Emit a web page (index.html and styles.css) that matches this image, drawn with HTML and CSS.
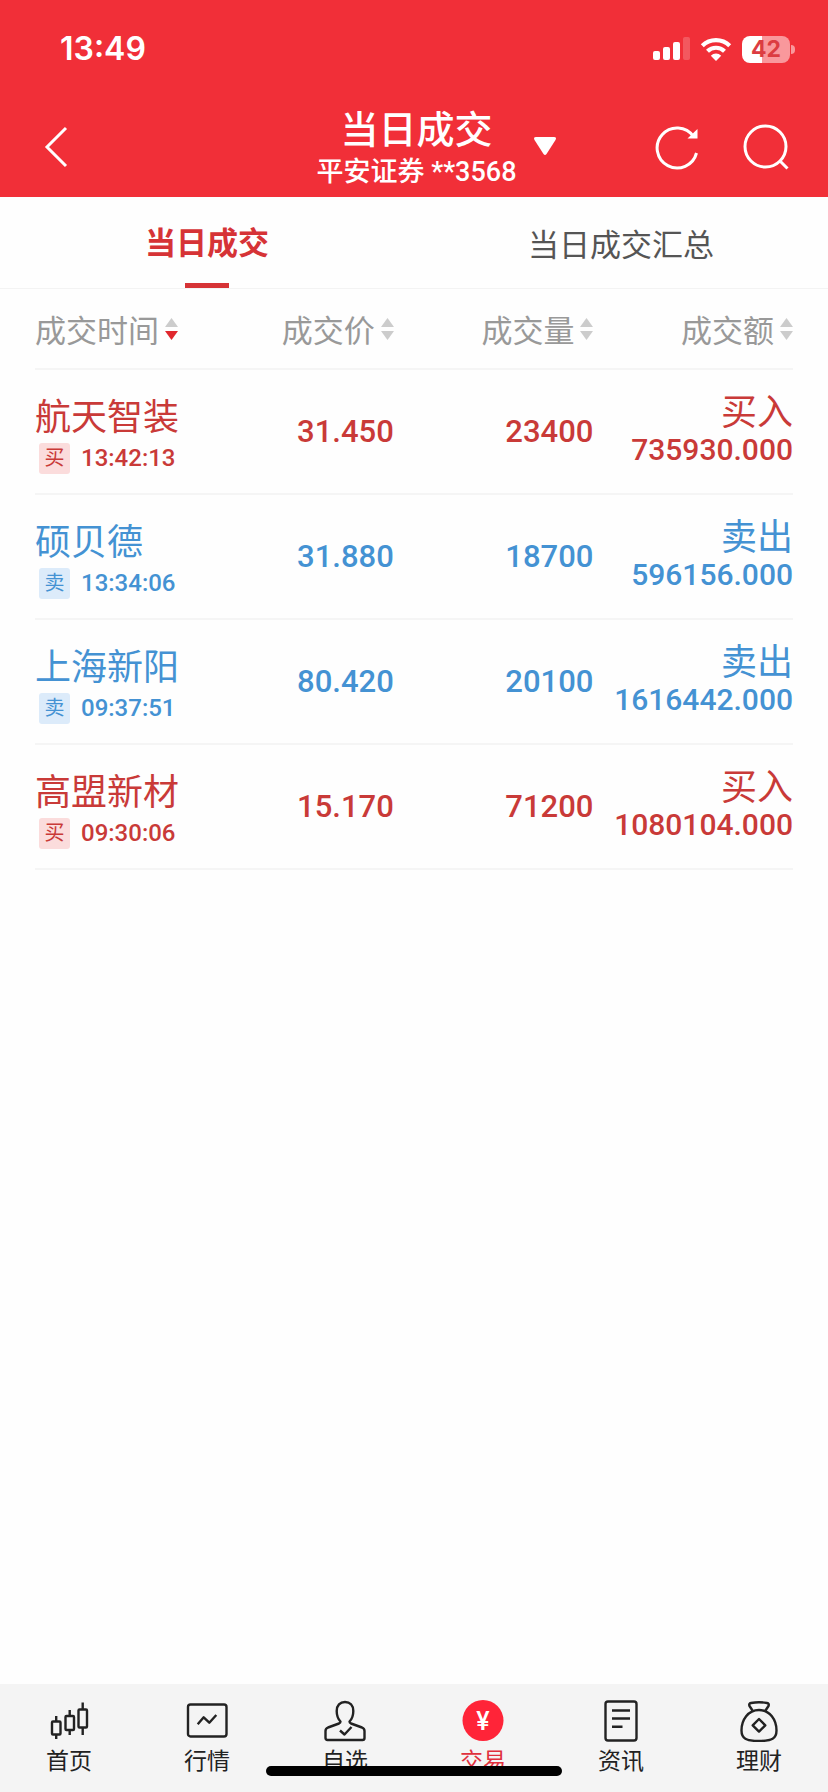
FILE: index.html
```html
<!DOCTYPE html>
<html lang="zh-CN">
<head>
    <meta charset="UTF-8">
    <meta name="viewport" content="width=device-width, initial-scale=1.0">
    <title>当日成交</title>
    <link rel="stylesheet" href="styles.css">
</head>
<body>
    <!-- sort arrows, shared by the table headings -->
    <svg class="sprite" aria-hidden="true">
        <symbol id="sort" viewBox="0 0 13 22">
            <path class="sort-up" d="M6.5 0L13 9H0z"/>
            <path class="sort-down" d="M6.5 22L0 13h13z"/>
        </symbol>
    </svg>

    <header class="top">
        <div class="status-bar">
            <div class="clock">13:49</div>
            <div class="status-icons">
                <svg class="signal" viewBox="0 0 37 24">
                    <rect x="0" y="14" width="7" height="9" rx="2"/>
                    <rect x="10" y="10" width="7" height="13" rx="2"/>
                    <rect x="20" y="5" width="7" height="18" rx="2"/>
                    <rect x="30" y="0" width="7" height="23" rx="2" opacity="0.2"/>
                </svg>
                <svg class="wifi" viewBox="0 0 32 24">
                    <path d="M2.3 8.7a19.5 19.5 0 0 1 27.4 0" fill="none" stroke="#fff" stroke-width="4.2"/>
                    <path d="M7.5 14.2a12.2 12.2 0 0 1 17 0" fill="none" stroke="#fff" stroke-width="4.2"/>
                    <path d="M16 24l-5.2-5.3a7.4 7.4 0 0 1 10.4 0z"/>
                </svg>
                <div class="battery">42</div>
            </div>
        </div>
        <div class="nav-bar">
            <button type="button" class="icon-btn" aria-label="返回">
                <svg width="24" height="42" viewBox="0 0 24 42"><path d="M22 2L3 21l19 19"/></svg>
            </button>
            <div class="title">
                <h1>当日成交</h1>
                <p>平安证券 **3568</p>
            </div>
            <div class="nav-right">
                <button type="button" class="icon-btn" aria-label="切换账户">
                    <svg width="24" height="20" viewBox="0 0 24 20"><path class="caret" d="M3 0h18q3 0 1.500 3L13.500 17q-1.500 2-3 0L1.500 3Q0 0 3 0z"/></svg>
                </button>
                <div class="nav-actions">
                    <button type="button" class="icon-btn" aria-label="刷新">
                        <svg width="46" height="46" viewBox="0 0 46 46">
                            <path d="M38.500 12.500A20 20 0 1 0 41.500 29"/>
                            <path class="caret" d="M42.500 5v9.500h-10z"/>
                        </svg>
                    </button>
                    <button type="button" class="icon-btn" aria-label="搜索">
                        <svg width="46" height="46" viewBox="0 0 46 46">
                            <circle cx="22.500" cy="22.500" r="20.500"/>
                            <path d="M37 37l7.500 7.500"/>
                        </svg>
                    </button>
                </div>
            </div>
        </div>
    </header>

    <nav class="tabs">
        <a href="#" class="tab active">当日成交</a>
        <a href="#" class="tab">当日成交汇总</a>
    </nav>

    <main>
        <table class="deals">
            <thead>
                <tr>
                    <th><button type="button" class="sort-btn desc">成交时间<svg class="sort"><use href="#sort"/></svg></button></th>
                    <th><button type="button" class="sort-btn">成交价<svg class="sort"><use href="#sort"/></svg></button></th>
                    <th><button type="button" class="sort-btn">成交量<svg class="sort"><use href="#sort"/></svg></button></th>
                    <th><button type="button" class="sort-btn">成交额<svg class="sort"><use href="#sort"/></svg></button></th>
                </tr>
            </thead>
            <tbody>
                <tr class="buy">
                    <td><div class="name">航天智装</div><div class="time"><span class="badge">买</span>13:42:13</div></td>
                    <td>31.450</td>
                    <td>23400</td>
                    <td><div class="side">买入</div><div class="amount">735930.000</div></td>
                </tr>
                <tr class="sell">
                    <td><div class="name">硕贝德</div><div class="time"><span class="badge">卖</span>13:34:06</div></td>
                    <td>31.880</td>
                    <td>18700</td>
                    <td><div class="side">卖出</div><div class="amount">596156.000</div></td>
                </tr>
                <tr class="sell">
                    <td><div class="name">上海新阳</div><div class="time"><span class="badge">卖</span>09:37:51</div></td>
                    <td>80.420</td>
                    <td>20100</td>
                    <td><div class="side">卖出</div><div class="amount">1616442.000</div></td>
                </tr>
                <tr class="buy">
                    <td><div class="name">高盟新材</div><div class="time"><span class="badge">买</span>09:30:06</div></td>
                    <td>15.170</td>
                    <td>71200</td>
                    <td><div class="side">买入</div><div class="amount">1080104.000</div></td>
                </tr>
            </tbody>
        </table>
    </main>

    <nav class="bottom-nav">
        <a href="#">
            <svg viewBox="0 0 42 42">
                <rect x="4" y="21.500" width="8.500" height="13" rx="1"/>
                <rect x="17.500" y="16" width="8.500" height="14" rx="1"/>
                <rect x="30.500" y="9.500" width="8.500" height="18" rx="1"/>
                <path d="M8.200 16v5.500M8.200 34.500V39M21.700 10v6M21.700 30v5M34.700 2.500v7M34.700 27.500V35"/>
            </svg>
            首页
        </a>
        <a href="#">
            <svg viewBox="0 0 42 42">
                <rect x="2" y="4.500" width="38.500" height="32" rx="2.500"/>
                <path d="M11.700 24.300l6-7 5.600 5.400 7-7.700"/>
            </svg>
            行情
        </a>
        <a href="#">
            <svg viewBox="0 0 42 42">
                <path d="M16.500 21.500C14 19 12.700 15.500 12.700 11c0-5.500 3.300-9 8.300-9s8.300 3.500 8.300 9c0 4.500-1.300 8-3.800 10.500 0 1 .5 1.500 1.500 2l11 4q2.500 1 2.500 3.500v7q0 2-2 2h-35q-2 0-2-2v-7q0-2.500 2.500-3.500l11-4c1-.5 1.500-1 1.500-2z"/>
                <path d="M16 30.500l4.500 4L27.500 27"/>
            </svg>
            自选
        </a>
        <a href="#" class="current">
            <svg viewBox="0 0 42 42">
                <circle cx="21" cy="20.500" r="20.500"/>
                <text x="21" y="30" text-anchor="middle">¥</text>
            </svg>
            交易
        </a>
        <a href="#">
            <svg viewBox="0 0 42 42">
                <rect x="5.500" y="1.500" width="31" height="39" rx="2.500"/>
                <path d="M12 10.500h18M12 18.500h18M12 26.700h10.500"/>
            </svg>
            资讯
        </a>
        <a href="#">
            <svg viewBox="0 0 42 42">
                <path d="M14.500 10.500l-3-4.500q-1-2.500 1.500-3 8-1.500 16 0 2.500.5 1.500 3l-3 4.500"/>
                <path d="M21 10C10 10 3.500 20 3.500 30.500 3.500 38.500 8 41 21 41s17.500-2.500 17.500-10.500C38.500 20 32 10 21 10z"/>
                <path d="M21 19l6.300 6.300L21 31.600l-6.300-6.300z"/>
            </svg>
            理财
        </a>
        <div class="home-indicator"></div>
    </nav>
</body>
</html>
```

FILE: styles.css
```css
* {
    margin: 0;
    padding: 0;
    box-sizing: border-box;
}

body {
    min-height: 100vh;
    display: flex;
    flex-direction: column;
    background: #fefefe;
    font-family: Roboto, "Noto Sans CJK SC", sans-serif;
}

button {
    border: none;
    background: none;
    color: inherit;
    font: inherit;
    cursor: pointer;
}

a {
    color: inherit;
    text-decoration: none;
}

.sprite {
    display: none;
}

/* header */
.top {
    background: #f12f38;
    color: #fff;
}

.status-bar {
    display: flex;
    justify-content: space-between;
    align-items: center;
    height: 98px;
    padding: 0 38px 0 60px;
}

.clock {
    font: 600 32px/40px Inter, sans-serif;
}

.status-icons {
    display: flex;
    align-items: center;
    gap: 10px;
    fill: #fff;
}

.signal {
    width: 37px;
    height: 24px;
}

.wifi {
    width: 32px;
    height: 24px;
}

.battery {
    position: relative;
    width: 48px;
    height: 27px;
    border-radius: 8px;
    background: linear-gradient(90deg, #fff 42%, #f9989c 42%);
    color: #dc3c41;
    font: 700 23px/27px Inter, sans-serif;
    text-align: center;
}

.battery::after {
    content: "";
    position: absolute;
    top: 9px;
    right: -5px;
    width: 4px;
    height: 9px;
    border-radius: 0 4px 4px 0;
    background: #f9989c;
}

.nav-bar {
    display: grid;
    grid-template-columns: 1fr auto 1fr;
    align-items: center;
    height: 99px;
    padding: 0 39px 2px 44px;
}

.icon-btn {
    display: flex;
    justify-self: start;
}

.icon-btn svg {
    fill: none;
    stroke: #fff;
    stroke-width: 3;
}

.icon-btn .caret {
    fill: #fff;
    stroke: none;
}

.title {
    padding-top: 6px;
    text-align: center;
}

.title h1 {
    font-size: 38px;
    line-height: 44px;
    font-weight: 500;
}

.title p {
    font-size: 27px;
    line-height: 40px;
    font-weight: 500;
}

.nav-right {
    display: flex;
    justify-content: space-between;
    align-items: center;
    padding-left: 16px;
}

.nav-actions {
    display: flex;
    gap: 42px;
}

/* tabs */
.tabs {
    display: flex;
    height: 92px;
    border-bottom: 1px solid #f3f3f3;
    color: #555;
    font-size: 31px;
}

.tab {
    flex: 1;
    display: flex;
    flex-direction: column;
    align-items: center;
    justify-content: center;
}

.tab.active {
    position: relative;
    padding-bottom: 5px;
    color: #d63336;
    font-weight: 700;
}

.tab.active::after {
    content: "";
    position: absolute;
    bottom: 0;
    width: 44px;
    height: 5px;
    background: #d63336;
}

/* deals table */
main {
    flex: 1;
    padding: 0 35px;
}

.deals {
    width: 100%;
    table-layout: fixed;
    border-collapse: collapse;
}

.deals th,
.deals td {
    border-bottom: 2px solid #f5f5f5;
    text-align: right;
    vertical-align: middle;
    white-space: nowrap;
}

.deals th {
    height: 80px;
    color: #999;
    font-size: 31px;
    font-weight: 400;
}

.deals th:first-child {
    width: 21%;
}

.deals td {
    height: 125px;
    font-size: 31px;
    font-weight: 500;
}

.deals th:first-child,
.deals td:first-child {
    text-align: left;
}

.deals td:first-child {
    padding-top: 9px;
}

.sort-btn {
    display: inline-flex;
    align-items: center;
    gap: 6px;
}

.sort {
    width: 13px;
    height: 22px;
    fill: #ccc;
    color: #ccc;
}

.desc .sort {
    color: #e0282e;
}

.sort-down {
    fill: currentColor;
}

.buy {
    color: #c93a38;
}

.sell {
    color: #4492d3;
}

.name {
    font-size: 36px;
    line-height: 44px;
    font-weight: 400;
}

.time {
    display: flex;
    align-items: center;
    gap: 11px;
    height: 36px;
    padding-left: 4px;
    font-size: 24px;
}

.badge {
    width: 31px;
    height: 31px;
    border-radius: 3px;
    font-size: 20px;
    line-height: 31px;
    font-weight: 400;
    text-align: center;
}

.buy .badge {
    background: #fbdcdc;
}

.sell .badge {
    background: #dcebfa;
}

.side {
    font-size: 36px;
    line-height: 36px;
    font-weight: 400;
}

.amount {
    font-size: 30px;
    line-height: 38px;
}

/* bottom navigation */
.bottom-nav {
    position: relative;
    display: grid;
    grid-template-columns: repeat(6, 1fr);
    height: 108px;
    padding-top: 16px;
    background: #f4f4f4;
    color: #222;
    font-size: 23px;
    line-height: 40px;
}

.bottom-nav a {
    display: flex;
    flex-direction: column;
    align-items: center;
}

.bottom-nav svg {
    width: 42px;
    height: 42px;
    fill: none;
    stroke: currentColor;
    stroke-width: 2.4;
    stroke-linejoin: round;
}

.bottom-nav .current {
    color: #e0303c;
}

.current circle {
    fill: #ff2438;
    stroke: none;
}

.current text {
    fill: #fff;
    stroke: none;
    font-size: 25px;
    font-weight: 500;
}

.home-indicator {
    position: absolute;
    left: 50%;
    bottom: 16px;
    width: 296px;
    height: 10px;
    border-radius: 5px;
    background: #000;
    transform: translateX(-50%);
}
```
